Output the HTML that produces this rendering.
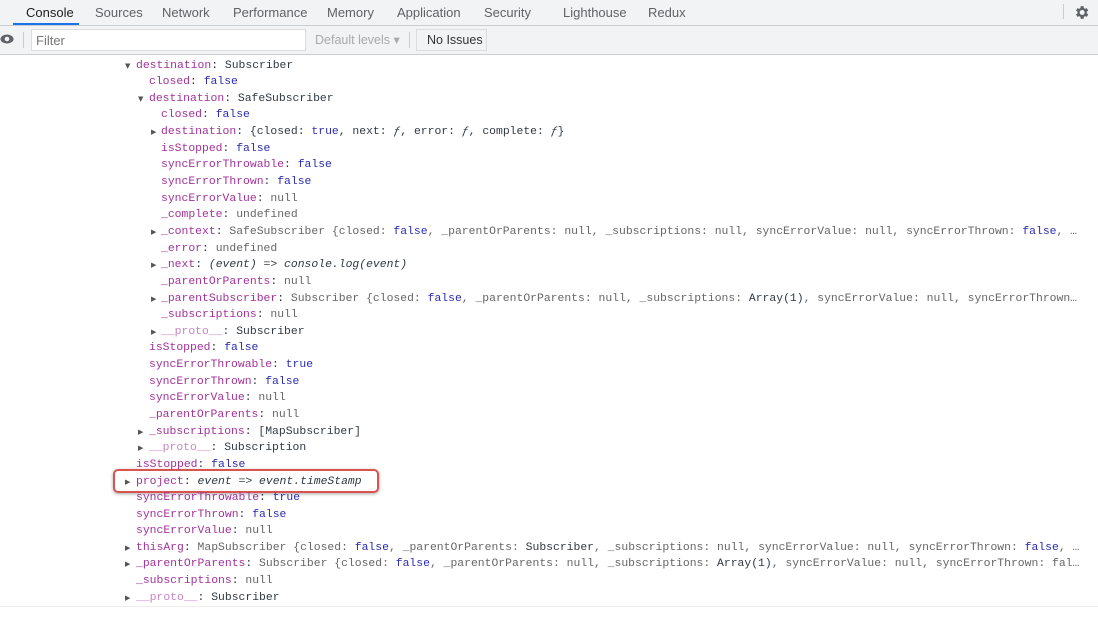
<!DOCTYPE html>
<html><head><meta charset="utf-8"><style>
body{margin:0;width:1098px;height:615px;overflow:hidden;background:#fff;position:relative;font-family:"Liberation Sans",sans-serif}
.tb{position:absolute;left:0;top:0;width:1098px;height:25px;background:#f1f3f4;border-bottom:1px solid #cacdd1}
.tab{position:absolute;top:5px;font-size:13px;color:#5f6368}
.tb2{position:absolute;left:0;top:26px;width:1098px;height:28px;background:#f1f3f4;border-bottom:1px solid #cacdd1}
.w{position:absolute;left:0;top:1.5px;width:1098px;height:615px}
.l{position:absolute;font-family:"Liberation Mono",monospace;font-size:11.4px;white-space:pre;line-height:16px;color:#303942;max-width:945px;overflow:hidden;text-overflow:ellipsis}
.k{color:#a1329a}.b{color:#2b2bb0}.n{color:#666}.g{color:#666}.i{font-style:italic}
.a{position:absolute;font-size:7px;color:#555;font-family:"DejaVu Sans",sans-serif}
</style></head><body>
<div class="tb">
<span class="tab" style="left:26px;color:#202124">Console</span>
<div style="position:absolute;left:13px;top:23px;width:66px;height:2px;background:#1a73e8"></div>
<span class="tab" style="left:95px">Sources</span>
<span class="tab" style="left:162px">Network</span>
<span class="tab" style="left:233px">Performance</span>
<span class="tab" style="left:327px">Memory</span>
<span class="tab" style="left:397px">Application</span>
<span class="tab" style="left:484px">Security</span>
<span class="tab" style="left:563px">Lighthouse</span>
<span class="tab" style="left:648px">Redux</span>
<div style="position:absolute;left:1063px;top:4px;width:1px;height:15px;background:#ccc"></div>
<svg style="position:absolute;left:1073px;top:4px" width="17" height="17" viewBox="0 0 24 24"><path fill="#5f6368" d="M19.4 13a7.5 7.5 0 000-2l2.1-1.6-2-3.5-2.5 1a7 7 0 00-1.7-1L14.9 3h-4l-.4 2.9a7 7 0 00-1.7 1l-2.5-1-2 3.5L6.4 11a7.5 7.5 0 000 2l-2.1 1.6 2 3.5 2.5-1a7 7 0 001.7 1l.4 2.9h4l.4-2.9a7 7 0 001.7-1l2.5 1 2-3.5zM12.9 15.5a3.5 3.5 0 110-7 3.5 3.5 0 010 7z"/></svg>
</div>
<div class="tb2">
<svg style="position:absolute;left:0;top:7px" width="14" height="12" viewBox="0 0 14 10"><ellipse cx="7" cy="5" rx="6.5" ry="4.5" fill="#5f6368"/><circle cx="7" cy="5" r="2.3" fill="#f1f3f4"/></svg>
<div style="position:absolute;left:23px;top:6px;width:1px;height:16px;background:#ccc"></div>
<div style="position:absolute;left:31px;top:3px;width:273px;height:20px;background:#fff;border:1px solid #dadce0"></div>
<span style="position:absolute;left:36px;top:7px;font-size:13px;color:#777">Filter</span>
<span style="position:absolute;left:315px;top:6px;font-size:12.5px;color:#aaa">Default levels ▾</span>
<div style="position:absolute;left:409px;top:6px;width:1px;height:16px;background:#ccc"></div>
<div style="position:absolute;left:416px;top:3px;width:69px;height:20px;border:1px solid #dadce0;background:#f1f3f4"></div>
<span style="position:absolute;left:427px;top:7px;font-size:12.5px;color:#333">No Issues</span>
</div>

<div style="position:absolute;left:113px;top:469px;width:262px;height:20px;border:2px solid #d9534f;border-radius:5px;box-shadow:0 1px 3px rgba(0,0,0,.35)"></div>
<div class="w">
<span class="a" style="left:125px;top:60px">▼</span><div class="l" style="left:136px;top:56px"><span class="k">destination</span>: Subscriber</div>
<div class="l" style="left:149px;top:72px"><span class="k">closed</span>: <span class="b">false</span></div>
<span class="a" style="left:138px;top:93px">▼</span><div class="l" style="left:149px;top:89px"><span class="k">destination</span>: SafeSubscriber</div>
<div class="l" style="left:161px;top:105px"><span class="k">closed</span>: <span class="b">false</span></div>
<span class="a" style="left:151px;top:126px">▶</span><div class="l" style="left:161px;top:122px"><span class="k">destination</span>: {closed: <span class="b">true</span>, next: <span class="i">ƒ</span>, error: <span class="i">ƒ</span>, complete: <span class="i">ƒ</span>}</div>
<div class="l" style="left:161px;top:139px"><span class="k">isStopped</span>: <span class="b">false</span></div>
<div class="l" style="left:161px;top:155px"><span class="k">syncErrorThrowable</span>: <span class="b">false</span></div>
<div class="l" style="left:161px;top:172px"><span class="k">syncErrorThrown</span>: <span class="b">false</span></div>
<div class="l" style="left:161px;top:189px"><span class="k">syncErrorValue</span>: <span class="n">null</span></div>
<div class="l" style="left:161px;top:205px"><span class="k">_complete</span>: <span class="n">undefined</span></div>
<span class="a" style="left:151px;top:226px">▶</span><div class="l" style="left:161px;top:222px;width:918px"><span class="k">_context</span>: <span class="g">SafeSubscriber {closed: <span class="b">false</span>, _parentOrParents: null, _subscriptions: null, syncErrorValue: null, syncErrorThrown: <span class="b">false</span>, …</span></div>
<div class="l" style="left:161px;top:239px"><span class="k">_error</span>: <span class="n">undefined</span></div>
<span class="a" style="left:151px;top:259px">▶</span><div class="l" style="left:161px;top:255px"><span class="k">_next</span>: <span class="i">(event) =&gt; console.log(event)</span></div>
<div class="l" style="left:161px;top:272px"><span class="k">_parentOrParents</span>: <span class="n">null</span></div>
<span class="a" style="left:151px;top:293px">▶</span><div class="l" style="left:161px;top:289px;width:918px"><span class="k">_parentSubscriber</span>: <span class="g">Subscriber {closed: <span class="b">false</span>, _parentOrParents: null, _subscriptions: <span style="color:#303942">Array(1)</span>, syncErrorValue: null, syncErrorThrown…</span></div>
<div class="l" style="left:161px;top:305px"><span class="k">_subscriptions</span>: <span class="n">null</span></div>
<span class="a" style="left:151px;top:326px">▶</span><div class="l" style="left:161px;top:322px"><span class="k" style="opacity:.6">__proto__</span>: Subscriber</div>
<div class="l" style="left:149px;top:338px"><span class="k">isStopped</span>: <span class="b">false</span></div>
<div class="l" style="left:149px;top:355px"><span class="k">syncErrorThrowable</span>: <span class="b">true</span></div>
<div class="l" style="left:149px;top:372px"><span class="k">syncErrorThrown</span>: <span class="b">false</span></div>
<div class="l" style="left:149px;top:388px"><span class="k">syncErrorValue</span>: <span class="n">null</span></div>
<div class="l" style="left:149px;top:405px"><span class="k">_parentOrParents</span>: <span class="n">null</span></div>
<span class="a" style="left:138px;top:426px">▶</span><div class="l" style="left:149px;top:422px"><span class="k">_subscriptions</span>: [MapSubscriber]</div>
<span class="a" style="left:138px;top:442px">▶</span><div class="l" style="left:149px;top:438px"><span class="k" style="opacity:.6">__proto__</span>: Subscription</div>
<div class="l" style="left:136px;top:455px"><span class="k">isStopped</span>: <span class="b">false</span></div>
<span class="a" style="left:125px;top:476px">▶</span><div class="l" style="left:136px;top:472px"><span class="k">project</span>: <span class="i">event =&gt; event.timeStamp</span></div>
<div class="l" style="left:136px;top:488px"><span class="k">syncErrorThrowable</span>: <span class="b">true</span></div>
<div class="l" style="left:136px;top:505px"><span class="k">syncErrorThrown</span>: <span class="b">false</span></div>
<div class="l" style="left:136px;top:521px"><span class="k">syncErrorValue</span>: <span class="n">null</span></div>
<span class="a" style="left:125px;top:542px">▶</span><div class="l" style="left:136px;top:538px;width:944px"><span class="k">thisArg</span>: <span class="g">MapSubscriber {closed: <span class="b">false</span>, _parentOrParents: <span style="color:#303942">Subscriber</span>, _subscriptions: null, syncErrorValue: null, syncErrorThrown: <span class="b">false</span>, …</span></div>
<span class="a" style="left:125px;top:558px">▶</span><div class="l" style="left:136px;top:554px;width:944px"><span class="k">_parentOrParents</span>: <span class="g">Subscriber {closed: <span class="b">false</span>, _parentOrParents: null, _subscriptions: <span style="color:#303942">Array(1)</span>, syncErrorValue: null, syncErrorThrown: fal…</span></div>
<div class="l" style="left:136px;top:571px"><span class="k">_subscriptions</span>: <span class="n">null</span></div>
<span class="a" style="left:125px;top:592px">▶</span><div class="l" style="left:136px;top:588px"><span class="k" style="opacity:.6">__proto__</span>: Subscriber</div>
</div>
<div style="position:absolute;left:0;top:606px;width:1098px;height:1px;background:#eee"></div>
</body></html>
